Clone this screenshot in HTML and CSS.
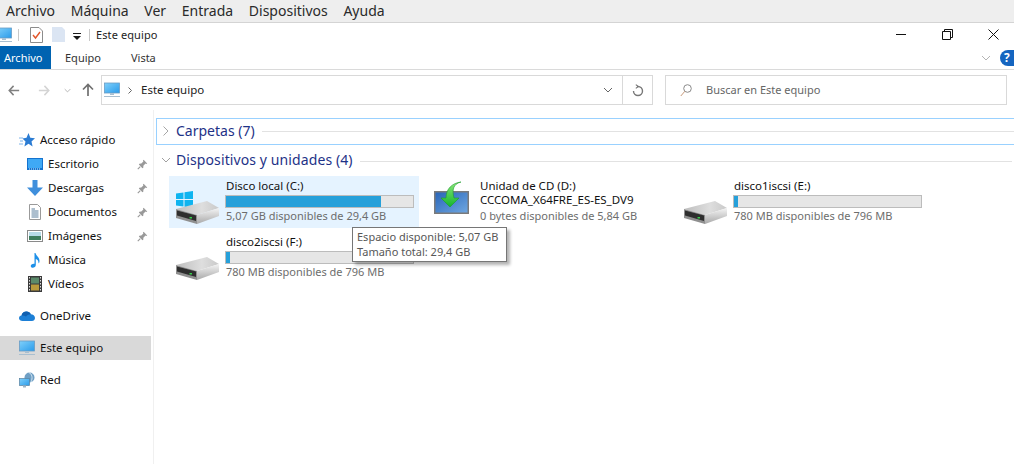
FILE: index.html
```html
<!DOCTYPE html>
<html lang="es">
<head>
<meta charset="utf-8">
<title>Este equipo</title>
<link rel="stylesheet" href="styles.css">
</head>
<body>
<svg class="defs" width="0" height="0" aria-hidden="true">
  <defs>
    <linearGradient id="screen" x1="0" y1="0" x2="1" y2="1"><stop offset="0" stop-color="#7fd0fb"/><stop offset="1" stop-color="#2a9bea"/></linearGradient>
    <linearGradient id="top" x1="0" y1="0" x2="1" y2="0"><stop offset="0" stop-color="#bdbdbd"/><stop offset=".6" stop-color="#dedede"/><stop offset="1" stop-color="#c9c9c9"/></linearGradient>
    <linearGradient id="side" x1="0" y1="0" x2="0" y2="1"><stop offset="0" stop-color="#f4f4f4"/><stop offset="1" stop-color="#a9a9a9"/></linearGradient>
    <linearGradient id="cd" x1="0" y1="0" x2="1" y2="1"><stop offset="0" stop-color="#2a66b8"/><stop offset="1" stop-color="#6ea6e0"/></linearGradient>
    <linearGradient id="arrow" x1="0" y1="0" x2="0" y2="1"><stop offset="0" stop-color="#8ce87a"/><stop offset="1" stop-color="#12b52a"/></linearGradient>
    <symbol id="pc" viewBox="0 0 16 16">
      <rect x="0.5" y="1" width="15" height="10" fill="url(#screen)" stroke="#6a9cc4" stroke-width="0.8"/>
      <rect x="6" y="11.2" width="4" height="1.8" fill="#a9bfd0"/>
      <rect x="0" y="14" width="16" height="1" fill="#a9bfd0"/>
    </symbol>
    <symbol id="pin" viewBox="0 0 10 10">
      <path d="M6 .7 9.300 4 8.400 4.600 7.700 4.200 5.800 6.100 5.700 7.900 4.900 8.300 1.700 5.100 2.100 4.300 3.900 4.200 5.800 2.300 5.400 1.600Z" fill="#999"/>
      <path d="M3 7 .7 9.300" stroke="#999" stroke-width="1"/>
    </symbol>
    <symbol id="drive" viewBox="0 0 44 26">
      <path d="M1 9 32 1 44 8 22 15Z" fill="url(#top)"/>
      <path d="M22 15 44 8 44 16 22 24Z" fill="url(#side)"/>
      <path d="M1 9 22 15 22 24 1 18Z" fill="#8f8f8f"/>
      <path d="M2 10.500 21 15.500 21 21 2 15.500Z" fill="#2e2e2e"/>
      <rect x="14.500" y="17" width="2.500" height="1.500" fill="#35d04a"/>
    </symbol>
    <symbol id="chev-d" viewBox="0 0 10 6"><path d="M1 1 5 5 9 1" fill="none" stroke="currentColor" stroke-width="1"/></symbol>
  </defs>
</svg>

<nav class="menubar">
  <span>Archivo</span><span>Máquina</span><span>Ver</span><span>Entrada</span><span>Dispositivos</span><span>Ayuda</span>
</nav>

<header class="titlebar">
  <div class="qat">
    <svg class="qat-pc" width="12" height="16"><use href="#pc" width="16" height="16" x="-4"/></svg>
    <i class="sep"></i>
    <svg class="qat-check" width="13" height="16" viewBox="0 0 13 16">
      <path d="M.5.5H9L12.500 4V15.500H.5Z" fill="#fff" stroke="#8c8c8c"/>
      <path d="M3 8 5.500 11 10 5" fill="none" stroke="#e2562b" stroke-width="1.400"/>
    </svg>
    <svg class="qat-doc" width="13" height="15" viewBox="0 0 13 15"><path d="M0 0H10L13 3V15H0Z" fill="#dbe5f3"/></svg>
    <svg class="qat-arrow" width="8" height="7" viewBox="0 0 8 7"><path d="M0 0H8V1H0ZM0 3H8L4 7Z" fill="#1a1a1a"/></svg>
    <i class="sep sep-last"></i>
    <span class="qat-title">Este equipo</span>
  </div>
  <div class="win-btns">
    <svg width="11" height="11" viewBox="0 0 11 11"><path d="M0 5.500H10" stroke="#111" stroke-width="1"/></svg>
    <svg width="11" height="11" viewBox="0 0 11 11"><path d="M.5 2.500H8.500V10.500H.5ZM2.500 2.500V.5H10.500V8.500H8.500" fill="none" stroke="#111"/></svg>
    <svg width="11" height="11" viewBox="0 0 11 11"><path d="M.5.5 10.500 10.500M10.500.5.5 10.500" stroke="#111"/></svg>
  </div>
</header>

<div class="tabs">
  <span class="tab tab-file">Archivo</span>
  <span class="tab tab-equipo">Equipo</span>
  <span class="tab tab-vista">Vista</span>
  <span class="tabs-right">
    <svg class="ribbon-chev" width="10" height="6"><use href="#chev-d"/></svg>
    <span class="help">?</span>
  </span>
</div>

<div class="navbar">
  <svg width="12" height="11" viewBox="0 0 14 12" preserveAspectRatio="none"><path d="M13 6H2M6.500 1 1.500 6 6.500 11" fill="none" stroke="#808080" stroke-width="1.800"/></svg>
  <svg class="nav-fwd" width="12" height="11" viewBox="0 0 14 12" preserveAspectRatio="none"><path d="M1 6H12M7.500 1 12.500 6 7.500 11" fill="none" stroke="#d4d4d4" stroke-width="1.800"/></svg>
  <svg class="nav-down" width="7" height="5"><use href="#chev-d" width="7" height="5"/></svg>
  <svg class="nav-up" width="12" height="14" viewBox="0 0 12 14"><path d="M6 13V2M1 6.500 6 1.500 11 6.500" fill="none" stroke="#707070" stroke-width="1.700"/></svg>
  <div class="address">
    <svg width="16" height="16"><use href="#pc"/></svg>
    <svg class="addr-gt" width="4" height="7" viewBox="0 0 4 7"><path d="M.5.5 3.500 3.500.5 6.500" fill="none" stroke="#666"/></svg>
    <span class="addr-text">Este equipo</span>
    <svg class="addr-down" width="10" height="6"><use href="#chev-d"/></svg>
    <span class="addr-refresh">
      <svg width="12" height="13" viewBox="0 0 12 13"><path d="M5 2.500H6A4.500 4.500 0 1 1 1.500 7" fill="none" stroke="#777" stroke-width="1.400"/><path d="M3.800.6 6.300 2.500 3.800 4.400" fill="none" stroke="#777" stroke-width="1.100"/></svg>
    </span>
  </div>
  <div class="search">
    <svg width="12" height="13" viewBox="0 0 12 13"><circle cx="7.500" cy="4.500" r="3.800" fill="none" stroke="#8a8a8a"/><path d="M4.800 7.300 .8 12" stroke="#c89a7a" stroke-width="1"/></svg>
    <span>Buscar en Este equipo</span>
  </div>
</div>

<main class="main">
  <aside class="sidebar">
    <div class="side-row side-top">
      <svg class="side-ic" width="16" height="16" viewBox="0 0 16 16"><path d="M9.500 1 11.300 5.800 16 6.200 12.500 9.500 13.600 14.500 9.500 11.800 5.400 14.500 6.500 9.500 3.500 6.500 7.500 5.800Z" fill="#2b7cd3"/><path d="M0 6H4M1 9H4M0 12H4" stroke="#7fb4ea"/></svg>
      <span>Acceso rápido</span>
    </div>
    <div class="side-row side-sub">
      <svg class="side-ic" width="16" height="16" viewBox="0 0 16 16"><rect y="2" width="16" height="12" fill="#1473cf"/><rect x="1" y="3" width="14" height="9" fill="#3fa9f5"/><path d="M2 13H14" stroke="#d8eefc" stroke-dasharray="1 1"/></svg>
      <span>Escritorio</span><svg class="pin" width="11" height="11"><use href="#pin"/></svg>
    </div>
    <div class="side-row side-sub">
      <svg class="side-ic" width="16" height="16" viewBox="0 0 16 16"><path d="M5.500 0H10.500V7.500H16L8 16 0 7.500H5.500Z" fill="#3f8fdc"/></svg>
      <span>Descargas</span><svg class="pin" width="11" height="11"><use href="#pin"/></svg>
    </div>
    <div class="side-row side-sub">
      <svg class="side-ic" width="16" height="16" viewBox="0 0 16 16"><path d="M2.500.5H10.500L13.500 3.500V15.500H2.500Z" fill="#fff" stroke="#9a9a9a"/><path d="M4.500 5H8M4.500 7H11.500M4.500 9H11.500M4.500 11H11.500M4.500 13H11.500" stroke="#5b7f9d"/></svg>
      <span>Documentos</span><svg class="pin" width="11" height="11"><use href="#pin"/></svg>
    </div>
    <div class="side-row side-sub">
      <svg class="side-ic" width="16" height="16" viewBox="0 0 16 16"><rect x=".5" y="2.500" width="15" height="11" fill="#fff" stroke="#8a8a8a"/><rect x="2" y="4" width="12" height="4" fill="#b7dbe8"/><rect x="2" y="8" width="12" height="4" fill="#3e7d5e"/></svg>
      <span>Imágenes</span><svg class="pin" width="11" height="11"><use href="#pin"/></svg>
    </div>
    <div class="side-row side-sub">
      <svg class="side-ic" width="16" height="16" viewBox="0 0 16 16"><path d="M7.500 1 8.500 1C9 4 12.500 5 12.500 9 12.500 10.500 12 11 11.500 11.500 11.700 9 10.500 7.500 8.800 7V13C8.800 15 6.800 16 5.200 15.700 3.500 15.300 3.300 13.500 4.500 12.500 5.500 11.700 6.700 11.500 7.500 11.800Z" fill="#1e90e8"/></svg>
      <span>Música</span>
    </div>
    <div class="side-row side-sub">
      <svg class="side-ic" width="16" height="16" viewBox="0 0 16 16"><rect x="1" y="0" width="14" height="16" fill="#3a3a3a"/><rect x="4" y="1.500" width="8" height="6" fill="#5b8a6a"/><rect x="4" y="8.500" width="8" height="6" fill="#b99a3c"/><path d="M2.500 1V15M13.500 1V15" stroke="#ddd" stroke-dasharray="1.500 1.500"/></svg>
      <span>Vídeos</span>
    </div>
    <div class="side-row side-top side-gap">
      <svg class="side-ic" width="16" height="16" viewBox="0 0 16 16"><path d="M3.500 13C1.500 13 0 11.800 0 10.200 0 8.700 1 7.700 2.500 7.500 3 5 5 3.500 7.500 3.500 9.500 3.500 11 4.500 11.800 6.300 14 6.300 16 7.800 16 10 16 11.800 14.500 13 13 13Z" fill="#1c7fd6"/><path d="M2.500 7.500C3 5 5 3.500 7.500 3.500 9.500 3.500 11 4.500 11.800 6.300 9 6.500 8 7.500 7 8.500 5.500 7.500 4 7.300 2.500 7.500Z" fill="#0f5fb0"/></svg>
      <span>OneDrive</span>
    </div>
    <div class="side-row side-top side-gap side-active">
      <svg class="side-ic" width="16" height="16"><use href="#pc"/></svg>
      <span>Este equipo</span>
    </div>
    <div class="side-row side-top side-gap">
      <svg class="side-ic" width="16" height="16" viewBox="0 0 16 16"><circle cx="10.500" cy="5.500" r="5" fill="#6f9fc4"/><path d="M10 .5C13 2 14 6 12 10" stroke="#d8e8f3" fill="none"/><rect x=".5" y="6.500" width="10" height="7" fill="url(#screen)" stroke="#57809f" stroke-width=".7"/><rect x="4" y="13.500" width="3" height="2" fill="#9db4c5"/></svg>
      <span>Red</span>
    </div>
  </aside>

  <section class="content">
    <div class="group group-focus">
      <svg class="g-chev" width="6" height="10" viewBox="0 0 6 10"><path d="M.5.5 5 5 .5 9.500" fill="none" stroke="#a6a6a6"/></svg>
      <span class="g-title">Carpetas (7)</span><i class="g-line"></i>
    </div>
    <div class="group group-open">
      <svg class="g-chev-d" width="10" height="6"><use href="#chev-d"/></svg>
      <span class="g-title">Dispositivos y unidades (4)</span><i class="g-line g-line-low"></i>
    </div>
    <div class="tiles">
      <div class="tile tile-hover">
        <div class="tile-icon">
          <svg class="win-logo" width="17" height="17" viewBox="0 0 17 17"><path d="M0 2.500 7.500 1.400V8H0ZM8.500 1.300 17 0V8H8.500ZM0 9H7.500V15.500L0 14.500ZM8.500 9H17V17L8.500 15.700Z" fill="#0fb4f0"/></svg>
          <svg class="drive" width="44" height="26"><use href="#drive"/></svg>
        </div>
        <div class="tile-body">
          <div class="t-name">Disco local (C:)</div>
          <div class="bar"><b class="fill" style="width:83%"></b></div>
          <div class="t-sub">5,07 GB disponibles de 29,4 GB</div>
        </div>
      </div>
      <div class="tile">
        <div class="tile-icon icon-cd">
          <svg width="36" height="34" viewBox="0 0 36 34">
            <rect x="0" y="10" width="35" height="23" fill="#7a7a7a"/>
            <rect x="1.500" y="11.500" width="32" height="20" fill="url(#cd)"/>
            <path d="M27 1C19 3 18 9 20 17H25L16 26 7 17H12C12 8 18 2 27 1Z" fill="url(#arrow)" stroke="#1d9a2c" stroke-width=".6"/>
          </svg>
        </div>
        <div class="tile-body">
          <div class="t-name">Unidad de CD (D:)</div>
          <div class="t-name t-line">CCCOMA_X64FRE_ES-ES_DV9</div>
          <div class="t-sub">0 bytes disponibles de 5,84 GB</div>
        </div>
      </div>
      <div class="tile">
        <div class="tile-icon"><svg class="drive" width="44" height="26"><use href="#drive"/></svg></div>
        <div class="tile-body">
          <div class="t-name">disco1iscsi (E:)</div>
          <div class="bar"><b class="fill" style="width:2%"></b></div>
          <div class="t-sub">780 MB disponibles de 796 MB</div>
        </div>
      </div>
      <div class="tile">
        <div class="tile-icon"><svg class="drive" width="44" height="26"><use href="#drive"/></svg></div>
        <div class="tile-body">
          <div class="t-name">disco2iscsi (F:)</div>
          <div class="bar"><b class="fill" style="width:2%"></b></div>
          <div class="t-sub">780 MB disponibles de 796 MB</div>
        </div>
      </div>
    </div>
  </section>
</main>

<div class="tooltip">Espacio disponible: 5,07 GB<br>Tamaño total: 29,4 GB</div>
</body>
</html>
```

FILE: styles.css
```css
* { box-sizing: border-box; }
html, body { margin: 0; height: 100%; }
body {
  position: relative;
  width: 1014px;
  height: 464px;
  overflow: hidden;
  background: #fff;
  color: #1a1a1a;
  font: 12px/16px "Noto Sans", "Open Sans", sans-serif;
}
.defs { position: absolute; }
svg { display: block; flex: none; }

.menubar {
  height: 23px;
  display: flex;
  gap: 15.7px;
  padding: 1px 0 0 6px;
  background: #eeeeee;
  border-bottom: 1px solid #d4d4d4;
  font-size: 14px;
  line-height: 20px;
  color: #2a2a2a;
}

.titlebar {
  height: 23px;
  display: flex;
  align-items: center;
  justify-content: space-between;
}
.qat { display: flex; align-items: center; height: 23px; }
.qat-pc { margin-right: 6px; }
.sep { width: 1px; height: 12px; background: #c8c8c8; }
.qat-check { margin-left: 11px; }
.qat-doc { margin-left: 9px; }
.qat-arrow { margin-left: 8px; margin-top: 3px; }
.sep-last { margin-left: 8px; }
.qat-title { margin-left: 6px; font-size: 11px; letter-spacing: .1px; color: #222; }
.win-btns { display: flex; gap: 35px; padding-right: 15px; align-items: center; }

.tabs {
  height: 24px;
  display: flex;
  align-items: center;
  border-bottom: 1px solid #dadada;
  font-size: 11px;
}
.tab { line-height: 23px; }
.tab-file { width: 51px; height: 23px; background: #0063b1; color: #fff; padding-left: 4px; }
.tab-equipo { margin-left: 14px; color: #333; }
.tab-vista { margin-left: 30px; color: #333; }
.tabs-right { margin-left: auto; display: flex; align-items: center; gap: 9px; color: #b0b0b0; }
.ribbon-chev { color: #b4b4b4; }
.help {
  width: 15px; height: 16px; margin-right: -1px;
  border-radius: 8px 0 0 8px;
  background: #1565c0;
  color: #fff;
  font-weight: 700;
  font-size: 12px;
  line-height: 16px;
  padding-left: 4px;
}

.navbar {
  height: 40px;
  display: flex;
  align-items: center;
  padding: 0 0 0 8px;
  color: #9a9a9a;
}
.nav-fwd { margin-left: 18px; }
.nav-down { margin-left: 14px; }
.nav-up { margin-left: 11px; }
.address {
  margin-left: 7px;
  width: 552px;
  height: 30px;
  display: flex;
  align-items: center;
  border: 1px solid #d9d9d9;
  padding-left: 2px;
}
.addr-gt { margin-left: 8px; }
.addr-text { margin-left: 9px; font-size: 11.5px; color: #222; }
.addr-down { margin-left: auto; margin-right: 9px; color: #666; }
.addr-refresh {
  width: 30px; height: 28px;
  display: flex; align-items: center; justify-content: center;
  border-left: 1px solid #d9d9d9;
}
.search {
  margin-left: 12px;
  width: 342px;
  height: 30px;
  display: flex;
  align-items: center;
  gap: 14px;
  padding-left: 14px;
  border: 1px solid #d9d9d9;
  font-size: 11px;
  color: #666;
}

.main { display: flex; height: 354px; }
.sidebar {
  width: 154px;
  flex: none;
  padding: 18px 0 0;
  border-right: 1px solid #f0f0f0;
}
.side-row {
  width: 151px;
  height: 24px;
  display: flex;
  align-items: center;
  font-size: 11.5px;
  color: #111;
}
.side-top .side-ic { margin: 0 5px 0 19px; }
.side-sub .side-ic { margin: 0 5px 0 27px; }
.side-gap { margin-top: 8px; }
.side-active { background: #d9d9d9; }
.pin { margin-left: auto; margin-right: 3px; }

.content { flex: 1; padding: 8px 0 0 2px; min-width: 0; }
.group { display: flex; align-items: center; font-size: 14px; color: #1e3287; }
.group-focus {
  height: 27px;
  border: 1px solid #99d1ff;
  border-right: 0;
  padding: 0 0 2px 6px;
}
.group-open { height: 23px; margin-top: 3px; padding: 0 2px 0 5px; }
.g-chev { margin-right: 7px; }
.g-chev-d { margin-right: 5px; color: #a0a0a0; }
.g-title { white-space: nowrap; }
.group-open .g-title { letter-spacing: .1px; }
.g-line { flex: 1; height: 1px; margin: 1px 0 0 7px; background: #e2e2e2; }
.g-line-low { margin-top: 3px; }

.tiles {
  display: grid;
  grid-template-columns: repeat(3, 250px);
  grid-auto-rows: 52px;
  gap: 4px;
  margin: 5px 0 0 13px;
}
.tile { display: flex; padding-left: 6px; position: relative; }
.tile-hover { background: #e5f3ff; }
.tile-icon { width: 50px; position: relative; flex: none; }
.win-logo { position: absolute; left: 1px; top: 15px; }
.drive { position: absolute; left: 0; top: 24px; }
.icon-cd svg { position: absolute; left: 5px; top: 5px; }
.tile-body { padding-top: 2px; width: 189px; }
.t-name { height: 16px; padding-left: 1px; font-size: 11.5px; line-height: 16px; color: #111; white-space: nowrap; }
.t-line { height: 14px; line-height: 12px; }
.t-sub { padding-left: 1px; font-size: 11px; line-height: 16px; color: #6d6d6d; white-space: nowrap; }
.bar {
  height: 13px;
  margin-top: 1px;
  background: #e6e6e6;
  border: 1px solid #bcbcbc;
}
.fill { display: block; height: 100%; background: #26a0da; }

.tooltip {
  position: absolute;
  left: 352px;
  top: 227px;
  width: 155px;
  height: 35px;
  padding: 1px 0 0 4px;
  background: #fff;
  border: 1px solid #767676;
  box-shadow: 3px 3px 3px rgba(0,0,0,.3);
  font-size: 11px;
  line-height: 15px;
  color: #575757;
  white-space: nowrap;
}
```
